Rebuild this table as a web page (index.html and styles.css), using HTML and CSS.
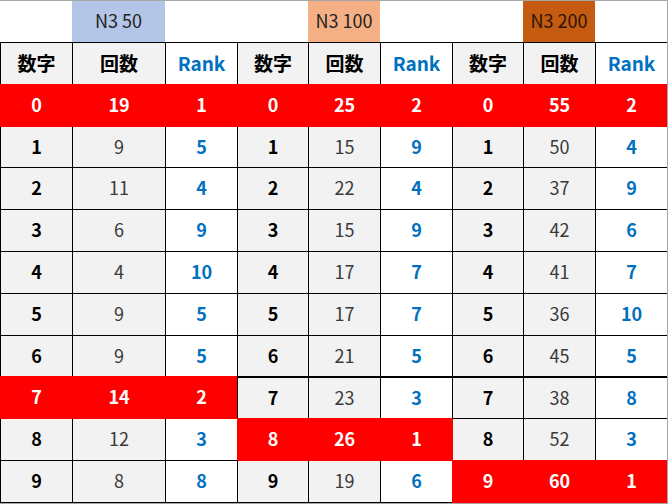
FILE: index.html
```html
<!DOCTYPE html>
<html lang="ja">
<head>
<meta charset="utf-8">
<link rel="stylesheet" href="styles.css">
</head>
<body>
<div class="sheet">
  <div class="c top"></div><div class="c top lbl blue-bg">N3 50</div><div class="c top"></div>
  <div class="c top"></div><div class="c top lbl peach-bg">N3 100</div><div class="c top"></div>
  <div class="c top"></div><div class="c top lbl brown-bg">N3 200</div><div class="c top"></div>

  <div class="c g hd">数字</div><div class="c g hd">回数</div><div class="c w hd rk">Rank</div>
  <div class="c g hd">数字</div><div class="c g hd">回数</div><div class="c w hd rk">Rank</div>
  <div class="c g hd">数字</div><div class="c g hd">回数</div><div class="c w hd rk">Rank</div>

  <div class="c red">0</div><div class="c red">19</div><div class="c red">1</div>
  <div class="c red">0</div><div class="c red">25</div><div class="c red">2</div>
  <div class="c red">0</div><div class="c red">55</div><div class="c red">2</div>

  <div class="c g k bt-red">1</div><div class="c g n bt-red">9</div><div class="c w r bt-red">5</div>
  <div class="c g k bt-red">1</div><div class="c g n bt-red">15</div><div class="c w r bt-red">9</div>
  <div class="c g k bt-red">1</div><div class="c g n bt-red">50</div><div class="c w r bt-red">4</div>

  <div class="c g k">2</div><div class="c g n">11</div><div class="c w r">4</div>
  <div class="c g k">2</div><div class="c g n">22</div><div class="c w r">4</div>
  <div class="c g k">2</div><div class="c g n">37</div><div class="c w r">9</div>

  <div class="c g k">3</div><div class="c g n">6</div><div class="c w r">9</div>
  <div class="c g k">3</div><div class="c g n">15</div><div class="c w r">9</div>
  <div class="c g k">3</div><div class="c g n">42</div><div class="c w r">6</div>

  <div class="c g k">4</div><div class="c g n">4</div><div class="c w r">10</div>
  <div class="c g k">4</div><div class="c g n">17</div><div class="c w r">7</div>
  <div class="c g k">4</div><div class="c g n">41</div><div class="c w r">7</div>

  <div class="c g k">5</div><div class="c g n">9</div><div class="c w r">5</div>
  <div class="c g k">5</div><div class="c g n">17</div><div class="c w r">7</div>
  <div class="c g k">5</div><div class="c g n">36</div><div class="c w r">10</div>

  <div class="c g k">6</div><div class="c g n">9</div><div class="c w r">5</div>
  <div class="c g k">6</div><div class="c g n">21</div><div class="c w r">5</div>
  <div class="c g k">6</div><div class="c g n">45</div><div class="c w r">5</div>

  <div class="c red">7</div><div class="c red">14</div><div class="c red">2</div>
  <div class="c g k thick">7</div><div class="c g n thick">23</div><div class="c w r thick">3</div>
  <div class="c g k thick">7</div><div class="c g n thick">38</div><div class="c w r thick">8</div>

  <div class="c g k bt-red">8</div><div class="c g n bt-red">12</div><div class="c w r bt-red">3</div>
  <div class="c red">8</div><div class="c red">26</div><div class="c red">1</div>
  <div class="c g k bl-red">8</div><div class="c g n">52</div><div class="c w r">3</div>

  <div class="c g k last">9</div><div class="c g n last">8</div><div class="c w r last">8</div>
  <div class="c g k last bt-red">9</div><div class="c g n last bt-red">19</div><div class="c w r last bt-red">6</div>
  <div class="c red last-red">9</div><div class="c red last-red">60</div><div class="c red last-red">1</div>
</div>
</body>
</html>
```

FILE: styles.css
```css
* { box-sizing: border-box; }

html, body {
  margin: 0;
  padding: 0;
  background: #ffffff;
}

.sheet {
  width: 668px;
  height: 504px;
  display: grid;
  grid-template-columns: 72px 93px 72px 71px 72px 72px 71px 72px 72px;
  grid-template-rows: 41px 42px 42px 41px 42px 42px 42px 42px 41px 42px 42px 43px;
  border-top: 1px solid #a6a6a6;
  border-right: 1px solid #a6a6a6;
  border-bottom: 1px solid #a6a6a6;
  font-family: "Noto Sans CJK JP", "Noto Sans", sans-serif;
  font-size: 18px;
}

.c {
  display: flex;
  align-items: center;
  justify-content: center;
  border-top: 1px solid #000;
  border-left: 1px solid #000;
  line-height: 1;
  padding-bottom: 3px;
}

.top {
  border: none;
  background: #fff;
  font-weight: 400;
  color: #222;
}

.lbl { font-size: 18px; }
.blue-bg { background: #b4c6e7; }
.peach-bg { background: #f4b084; }
.brown-bg { background: #c55a11; color: #2a1505; }

.g { background: #f2f2f2; }
.w { background: #ffffff; }

.hd {
  font-weight: 700;
  font-size: 19px;
  color: #000;
}

.rk { color: #0070c0; }

.k { font-weight: 700; color: #000; }
.n { font-weight: 400; color: #3a3a3a; }
.r { font-weight: 700; color: #0070c0; }

.red {
  background: #ff0000;
  color: #fff;
  font-weight: 700;
  border-top-color: #ff0000;
  border-left-color: #ff0000;
}

.bt-red { border-top-color: #ff0000; }
.bl-red { border-left-color: #ff0000; }

.thick { border-top-width: 2px; }

.last { border-bottom: 1px solid #000; }
.last-red { border-bottom: 1px solid #ff0000; }
```
